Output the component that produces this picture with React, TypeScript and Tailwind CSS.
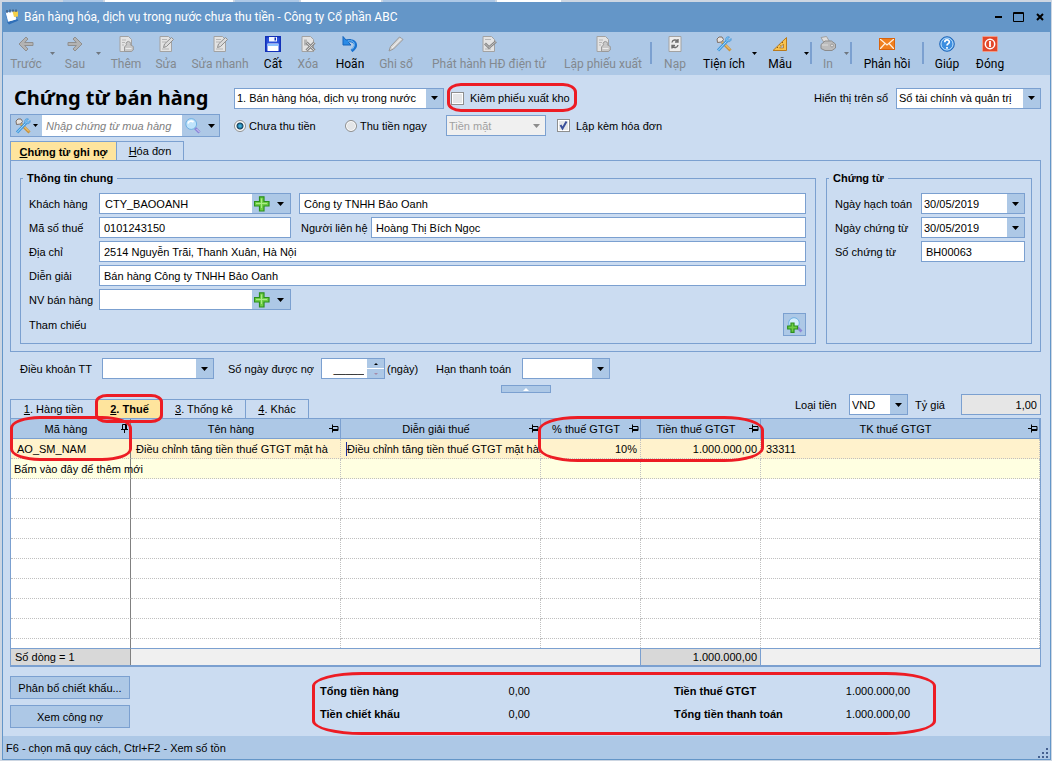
import type { ReactNode } from 'react'

const LINE = 'border-[#7ba0d0]'

/* ---------- icons ---------- */

function Svg({ children, size = 16 }: { children: ReactNode; size?: number }) {
  return (
    <svg width={size} height={size} viewBox="0 0 16 16" fill="none" aria-hidden="true" className="shrink-0">
      {children}
    </svg>
  )
}

const BackIcon = () => (
  <Svg>
    <path d="M8 1 1 8l7 7 2-2-3.300-3.500H15v-3H6.700L10 3z" fill="#b3b3b3" stroke="#8f8f8f" />
  </Svg>
)

const ForwardIcon = () => (
  <Svg>
    <path d="m8 1 7 7-7 7-2-2 3.300-3.500H1v-3h8.300L6 3z" fill="#b3b3b3" stroke="#8f8f8f" />
  </Svg>
)

const Sheet = () => (
  <path d="M2 .5h8.500l3 3v12H2z" fill="#e3e3e3" stroke="#a2a2a2" />
)

const AddIcon = () => (
  <Svg>
    <Sheet />
    <path d="M4 4h4M4 6.500h3M4 9h2" stroke="#b5b5b5" />
    <path d="M8.500 8.800a2.200 2.200 0 1 1 3.800 0l3 1.700v3.500l-2 1.500H6.500V11z" fill="#c8c8c8" stroke="#999" />
    <path d="M7.500 12.500h6" stroke="#ececec" />
  </Svg>
)

const EditIcon = () => (
  <Svg>
    <Sheet />
    <path d="M4 3.500h5M4 6h4M4 13h7" stroke="#b5b5b5" />
    <path d="m5.500 11.500 1-3.500L13.500 1.500l2 2-7 7z" fill="#dadada" stroke="#8e8e8e" />
  </Svg>
)

const SaveIcon = () => (
  <Svg>
    <path d="M.7.7h14.600v14.600H.7z" fill="#2a4fd8" stroke="#1230b8" strokeWidth="1.400" />
    <path d="M4 1h8v4.500H4z" fill="#f4f7ff" />
    <path d="M9.500 1.500H11V4.500H9.500z" fill="#1230b8" />
    <path d="M2.500 7.500h11v7.500h-11z" fill="#fff" />
    <path d="M2.500 8h11v2h-11z" fill="#8cc2ff" />
  </Svg>
)

const DeleteIcon = () => (
  <Svg>
    <Sheet />
    <path d="M4 3.500h3v6H4z" fill="#b5b5b5" />
    <path d="m6.500 6.500 8 8M14.500 6.500l-8 8" stroke="#8a8a8a" strokeWidth="3" />
    <path d="m6.500 6.500 8 8M14.500 6.500l-8 8" stroke="#d2d2d2" />
  </Svg>
)

const UndoIcon = () => (
  <Svg>
    <path d="M4 5.500c9-3 13 4 5.500 9.500" stroke="#1a72cf" strokeWidth="3" />
    <path d="M1 .5v8.500h8L6.500 6.500 8.500 3.500 4 4z" fill="#2b8be6" stroke="#1565bd" />
    <path d="M6 5c7-1.500 8 4.500 4 8.500" stroke="#79c0f7" />
  </Svg>
)

const PencilIcon = () => (
  <Svg>
    <path d="M1 15 2.500 10.500 11.500 1l3.500 2.500-9.500 9.500z" fill="#d5d5d5" stroke="#979797" />
    <path d="m4 12 9-9.500" stroke="#f2f2f2" />
  </Svg>
)

const PublishIcon = () => (
  <Svg>
    <Sheet />
    <path d="M4 3.500h6M4 13h6" stroke="#b5b5b5" />
    <path d="m4 7.500 4 4L15 5.500" stroke="#858585" strokeWidth="2.600" />
    <path d="m4 7.500 4 4L15 5.500" stroke="#cfcfcf" strokeWidth=".8" />
  </Svg>
)

const ReloadIcon = () => (
  <Svg>
    <path d="M2 .5h12v15H2z" fill="#ececec" stroke="#a2a2a2" />
    <path d="M5 6.500c.5-3 4-3 5.500-1.500M11 3v3H8M11 9c-.5 3-4 3-5.500 1.500M5 12.500v-3h3" stroke="#6e6e6e" strokeWidth="1.400" />
  </Svg>
)

const ToolsIcon = () => (
  <Svg>
    <path d="m6 6 8.500 8.500" stroke="#c9923a" strokeWidth="3" />
    <path d="m6.500 6 7.500 7.500" stroke="#ffd98a" />
    <path d="M5.500 6 1.500 6.500 1 3l2-2h3l1.500 2.500z" fill="#e7e3df" stroke="#7d6f67" />
    <path d="m2 14.500 9-9.500" stroke="#3f97dc" strokeWidth="3" />
    <path d="M15 2.500 13 4.500 11.500 3l2-2c-3-1-4.500 1.500-3.500 4 2.500 1.500 6 .5 5-2.500z" fill="#7cc4f5" stroke="#3f8fd2" strokeWidth=".7" />
    <path d="m2 14.500 8.500-9" stroke="#b4e0fb" />
  </Svg>
)

const RulerIcon = () => (
  <Svg>
    <path d="M14.500 1.500v13H1z" fill="#f8c24d" stroke="#b97a1c" />
    <path d="M11.500 8v4H7.500z" fill="#adc7e6" stroke="#b97a1c" strokeWidth=".8" />
    <path d="m10 6 1 1M7.500 8.500l1 1M5 11l1 1" stroke="#8c5a10" />
  </Svg>
)

const PrintIcon = () => (
  <Svg>
    <path d="M1 1.500 6.500.5l3 5-5 2z" fill="#dedede" stroke="#a0a0a0" />
    <path d="M1 8.500 5 5h6.500l4 3v4L12 14.500H5l-4-2z" fill="#bcbcbc" stroke="#8b8b8b" />
    <path d="M2 9h6" stroke="#dcdcdc" />
    <circle cx="12" cy="9.500" r="1.500" fill="#dedede" stroke="#9a9a9a" />
  </Svg>
)

const MailIcon = () => (
  <Svg>
    <path d="M0 2h16v12H0z" fill="#f07f1e" />
    <path d="m1 3 7 6 7-6M1 13l5-5.500M15 13l-5-5.500" stroke="#fff0df" strokeWidth="1.200" />
    <path d="M.5 2.500h15v11H.5z" stroke="#d9630c" />
  </Svg>
)

const HelpIcon = () => (
  <Svg>
    <circle cx="8" cy="8" r="7.300" fill="#3d8fe0" stroke="#2468b8" />
    <circle cx="8" cy="8" r="6" stroke="#bfe0fb" />
    <path d="M5.800 6.200c0-3 4.500-3 4.500-.2C10.300 7.600 8 7.700 8 9.600M8 11v1.700" stroke="#fff" strokeWidth="1.700" />
  </Svg>
)

const PowerIcon = () => (
  <Svg>
    <rect x=".5" y=".5" width="15" height="15" rx="1" fill="#e2472a" stroke="#f09a86" />
    <circle cx="8" cy="8" r="4.700" stroke="#fff" strokeWidth="1.500" />
    <path d="M8 5v6" stroke="#fff" strokeWidth="1.800" />
  </Svg>
)

const AppIcon = () => (
  <Svg>
    <path d="m1 3 9-1.500 3.500 10L4 14z" fill="#e8f3ff" stroke="#4c86c9" />
    <path d="m3 13 10-3 1.500 1.500L5 15.500z" fill="#2f6fb8" />
    <path d="m2.500 4.500 7-1 2.500 7-7.500 2z" fill="#fff" />
    <path d="M8.500 2.500h5.500v5l-4 .5z" fill="#f5d04a" />
    <path d="M3 1v3M6 .5v3M9 .5V3M12 .5v2.500" stroke="#31455e" />
  </Svg>
)

const SearchIcon = () => (
  <Svg>
    <path d="m10 10 4.500 4.500" stroke="#8c86d8" strokeWidth="3" />
    <path d="m11.500 11 3 3" stroke="#d9d5f8" />
    <circle cx="6.200" cy="6" r="5.400" fill="#bfe3fb" stroke="#6fb0e2" />
    <path d="M3 5.500c.5-2.500 3.500-3 5.500-1.500" stroke="#fff" strokeWidth="1.600" />
  </Svg>
)

const PlusPath = ({ d }: { d: string }) => <path d={d} fill="#6fce45" stroke="#2b8f1d" strokeWidth="1.200" />

const PlusIcon = () => (
  <Svg>
    <PlusPath d="M5.500.8h4.500v4.700h5V10h-5v5H5.500v-5h-5V5.500h5z" />
    <path d="M7.500 12V2.500M2 7.500h11" stroke="#a9ec86" />
  </Svg>
)

const SearchPlusIcon = () => (
  <Svg>
    <path d="m10.500 10.500 4 4" stroke="#8c86d8" strokeWidth="2.600" />
    <circle cx="7" cy="6" r="5.300" fill="#d4edfc" stroke="#6fb0e2" />
    <PlusPath d="M4 6h3v3h3.500v3H7v3.400H4V12H.7V9H4z" />
  </Svg>
)

const PinIcon = ({ down = false }: { down?: boolean }) => (
  <svg width="10" height="9" viewBox="0 0 10 9" fill="none" stroke="#000" aria-hidden="true" className="shrink-0">
    {down ? (
      <path d="M3.500.5h4v5h-4zM6.500.5v5M2 5.500h7M5.500 5.500V9" />
    ) : (
      <path d="M3.500 2.500H9v4H3.500zM3.500 5.500H9M3.500.5v8M0 4.500h3.500" />
    )}
  </svg>
)

function Caret({ muted = false }: { muted?: boolean }) {
  return (
    <svg width="7" height="4" viewBox="0 0 7 4" aria-hidden="true" className="shrink-0">
      <path d="M0 0h7L3.500 4z" fill={muted ? '#8c8c8c' : '#000'} />
    </svg>
  )
}

/* ---------- form parts ---------- */

// hand-drawn marker around a place the reader has to look at
const Ring = ({ className }: { className: string }) => (
  <span className={`pointer-events-none absolute z-10 border-[3px] border-[#ed1c24] ${className}`} />
)

function Combo({ id, value, className, label, disabled = false }: {
  id: string
  value: string
  className: string
  label?: string
  disabled?: boolean
}) {
  return (
    <span className={`relative flex h-[21px] border ${LINE} ${className}`}>
      <select
        id={id}
        aria-label={label}
        defaultValue={value}
        disabled={disabled}
        className={`w-full appearance-none pl-0.5 pr-[18px] outline-none ${disabled ? 'bg-[#f0f0f0] text-[#a0a0a0]' : 'bg-white'}`}
      >
        <option>{value}</option>
      </select>
      <span
        className={`pointer-events-none absolute inset-y-0 right-0 flex w-[17px] items-center justify-center ${
          disabled ? 'bg-[#f0f0f0]' : 'bg-[#adc8e6]'
        }`}
      >
        <Caret muted={disabled} />
      </span>
    </span>
  )
}

function Field({ id, value, className }: { id: string; value: string; className: string }) {
  return (
    <input
      id={id}
      defaultValue={value}
      className={`h-[21px] min-w-0 border bg-white px-1 outline-none ${LINE} ${className}`}
    />
  )
}

function LookupField({ id, value, label }: { id: string; value: string; label: string }) {
  return (
    <span className={`flex h-[21px] w-48 border bg-[#adc8e6] ${LINE}`}>
      <input id={id} defaultValue={value} className="min-w-0 flex-1 bg-white px-[5px] outline-none" />
      <button aria-label={`Thêm ${label}`} className="flex w-[19px] items-center justify-center">
        <PlusIcon />
      </button>
      <button aria-label={`Chọn ${label}`} className="flex w-[19px] items-center justify-center">
        <Caret />
      </button>
    </span>
  )
}

function Label({ htmlFor, children, className = '' }: { htmlFor: string; children: ReactNode; className?: string }) {
  return (
    <label htmlFor={htmlFor} className={`shrink-0 whitespace-nowrap ${className}`}>
      {children}
    </label>
  )
}

function CheckBox({ id, checked = false, children }: { id: string; checked?: boolean; children: ReactNode }) {
  return (
    <label htmlFor={id} className="flex items-center gap-1.5 whitespace-nowrap">
      <span className="relative flex size-[13px]">
        <input
          id={id}
          type="checkbox"
          defaultChecked={checked}
          className="peer size-[13px] appearance-none border border-[#8e8f8f] bg-[#e4e6e8] shadow-[inset_0_0_0_1px_#fff]"
        />
        <svg viewBox="0 0 13 13" className="pointer-events-none absolute inset-0 hidden peer-checked:block" aria-hidden="true">
          <path d="m3.500 6 2 3.500 4-7" fill="none" stroke="#3a4f9a" strokeWidth="2" />
        </svg>
      </span>
      {children}
    </label>
  )
}

function Radio({ id, checked = false, children, className = '' }: { id: string; checked?: boolean; children: ReactNode; className?: string }) {
  return (
    <label htmlFor={id} className={`flex items-center gap-[3px] whitespace-nowrap ${className}`}>
      <input
        id={id}
        type="radio"
        name="payment"
        defaultChecked={checked}
        className="size-3 appearance-none rounded-full border border-[#8e8f8f] bg-[#e4e6e8] shadow-[inset_0_0_0_1px_#fff] checked:bg-[radial-gradient(circle,#3fb0dc_0_1px,#12405f_3px,#f4f4f4_4px)]"
      />
      {children}
    </label>
  )
}

/* ---------- toolbar ---------- */

type Tool = { label: string; icon: ReactNode; width: string; off?: boolean; menu?: boolean; sep?: boolean }

const TOOLS: Tool[] = [
  { label: 'Trước', icon: <BackIcon />, width: 'w-[46px]', off: true, menu: true },
  { label: 'Sau', icon: <ForwardIcon />, width: 'w-[40px]', off: true, menu: true },
  { label: 'Thêm', icon: <AddIcon />, width: 'w-[50px]', off: true },
  { label: 'Sửa', icon: <EditIcon />, width: 'w-[30px]', off: true },
  { label: 'Sửa nhanh', icon: <EditIcon />, width: 'w-[78px]', off: true },
  { label: 'Cất', icon: <SaveIcon />, width: 'w-[28px]' },
  { label: 'Xóa', icon: <DeleteIcon />, width: 'w-[42px]', off: true },
  { label: 'Hoãn', icon: <UndoIcon />, width: 'w-[42px]' },
  { label: 'Ghi sổ', icon: <PencilIcon />, width: 'w-[50px]', off: true },
  { label: 'Phát hành HĐ điện tử', icon: <PublishIcon />, width: 'w-[136px]', off: true },
  { label: 'Lập phiếu xuất', icon: <AddIcon />, width: 'w-[92px]', off: true, sep: true },
  { label: 'Nạp', icon: <ReloadIcon />, width: 'w-[44px]', off: true },
  { label: 'Tiện ích', icon: <ToolsIcon />, width: 'w-[54px]', menu: true },
  { label: 'Mẫu', icon: <RulerIcon />, width: 'w-[46px]', menu: true, sep: true },
  { label: 'In', icon: <PrintIcon />, width: 'w-[30px]', off: true, menu: true, sep: true },
  { label: 'Phản hồi', icon: <MailIcon />, width: 'w-[68px]', sep: true },
  { label: 'Giúp', icon: <HelpIcon />, width: 'w-[44px]' },
  { label: 'Đóng', icon: <PowerIcon />, width: 'w-[42px]' },
]

function Toolbar() {
  return (
    <div role="toolbar" className="flex h-[43px] bg-[#adc8e6] font-[Roboto,sans-serif] text-xs">
      {TOOLS.map((t) => (
        <div key={t.label} className="flex shrink-0">
          <button
            disabled={t.off}
            className={`flex flex-col items-center gap-1 whitespace-nowrap pt-1 leading-4 ${t.width} ${t.off ? 'text-[#83898f]' : 'text-black'}`}
          >
            {t.icon}
            {t.label}
          </button>
          {t.menu && (
            <button aria-label={`${t.label} - tùy chọn`} className="flex w-1.5 items-center justify-center">
              <svg width="5" height="3" viewBox="0 0 5 3" aria-hidden="true">
                <path d="M0 0h5L2.500 3z" fill={t.off ? '#6f7780' : '#000'} />
              </svg>
            </button>
          )}
          {t.sep && <span className="mx-px mt-2.5 h-[22px] w-0.5 bg-[#7ba0d0]" />}
        </div>
      ))}
    </div>
  )
}

/* ---------- detail grid ---------- */

const COLUMNS = [
  { title: 'Mã hàng', width: 'w-[120px]', down: true },
  { title: 'Tên hàng', width: 'w-[210px]' },
  { title: 'Diễn giải thuế', width: 'w-[200px]' },
  { title: '% thuế GTGT', width: 'w-[100px]' },
  { title: 'Tiền thuế GTGT', width: 'w-[120px]' },
  { title: 'TK thuế GTGT', width: 'w-auto' },
]

const EMPTY_ROWS = 8

const cellBorder = (i: number) =>
  i === 0 ? 'border-r border-r-[#808080] border-b border-b-[#c0c0c0] [border-bottom-style:dotted]' : 'border-r border-b border-dotted border-[#c0c0c0]'

function DetailGrid() {
  return (
    <div className={`relative border border-b-2 bg-white ${LINE}`}>
      <Ring className="-left-px -top-[3px] h-[45px] w-[122px] rounded-[30px/12px]" />
      <Ring className="left-[527px] -top-[3px] h-[46px] w-[226px] rounded-[40px/14px]" />
      <table className="w-full table-fixed border-separate border-spacing-0">
        <thead>
          <tr className="h-5 bg-[#adc8e6]">
            {COLUMNS.map((c, i) => (
              <th key={c.title} className={`border-r border-b p-0 font-normal ${i === 0 ? 'border-r-[#808080] border-b-[#7ba0d0]' : LINE} ${c.width}`}>
                <span className="flex items-center pl-1.5 pr-px">
                  <span className="flex-1 pr-1 whitespace-nowrap">{c.title}</span>
                  <PinIcon down={c.down} />
                </span>
              </th>
            ))}
          </tr>
        </thead>
        <tbody>
          <tr className="h-5 bg-[#fff2cc]">
            <td className={`p-0 pl-1.5 ${cellBorder(0)}`}>AO_SM_NAM</td>
            <td className={`overflow-hidden p-0 pl-[5px] whitespace-nowrap ${cellBorder(1)}`}>
              Điều chỉnh tăng tiền thuế GTGT mặt hà
            </td>
            <td className={`p-0 pl-[5px] ${cellBorder(2)}`}>
              <input
                aria-label="Diễn giải thuế"
                defaultValue="Điều chỉnh tăng tiền thuế GTGT mặt hàng"
                className="block h-3.5 w-full border-l border-[#1c2f9c] bg-transparent outline-none"
              />
            </td>
            <td className={`p-0 pr-[3px] text-right ${cellBorder(3)}`}>10%</td>
            <td className={`p-0 pr-[3px] text-right ${cellBorder(4)}`}>1.000.000,00</td>
            <td className={`p-0 pl-[5px] ${cellBorder(5)}`}>33311</td>
          </tr>
          <tr className="h-5 bg-[#ffffe1]">
            {COLUMNS.map((c, i) => (
              <td key={c.title} className={`p-0 pl-[3px] whitespace-nowrap ${cellBorder(i)}`}>
                {i === 0 && 'Bấm vào đây để thêm mới'}
              </td>
            ))}
          </tr>
          {Array.from({ length: EMPTY_ROWS }, (_, r) => (
            <tr key={r} className="h-5">
              {COLUMNS.map((c, i) => (
                <td key={c.title} className={`p-0 ${cellBorder(i)}`} />
              ))}
            </tr>
          ))}
          <tr className="h-[9px]">
            {COLUMNS.map((c, i) => (
              <td key={c.title} className={`border-r p-0 ${i === 0 ? 'border-[#808080]' : 'border-dotted border-[#c0c0c0]'}`} />
            ))}
          </tr>
        </tbody>
        <tfoot>
          <tr className="h-[17px] bg-[#f0f0f0]">
            <td className="border-t border-r border-t-[#7ba0d0] border-r-[#808080] bg-[#d8d8d8] p-0 pl-1">Số dòng = 1</td>
            <td colSpan={3} className={`border-t border-r p-0 ${LINE}`} />
            <td className={`border-t border-r bg-[#d8d8d8] p-0 pr-[3px] text-right ${LINE}`}>1.000.000,00</td>
            <td className={`border-t p-0 ${LINE}`} />
          </tr>
        </tfoot>
      </table>
    </div>
  )
}

const DETAIL_TABS = [
  { key: '1', label: 'Hàng tiền', width: 'w-[86px]' },
  { key: '2', label: 'Thuế', width: 'w-[66px]', active: true },
  { key: '3', label: 'Thống kê', width: 'w-[83px]' },
  { key: '4', label: 'Khác', width: 'w-[62px]' },
]

const TOTALS = [
  ['Tổng tiền hàng', '0,00', 'Tiền thuế GTGT', '1.000.000,00'],
  ['Tiền chiết khấu', '0,00', 'Tổng tiền thanh toán', '1.000.000,00'],
]

export default function App() {
  return (
    <div className="flex min-h-screen flex-col bg-[#cdd6e2] pr-px pb-px pl-0.5 font-['Liberation_Sans',Arial,sans-serif] text-[11px] leading-[14px] text-black">
      {/* edge of the list window that lies behind */}
      <div className="flex h-0.5 gap-0.5 pl-[61px]" aria-hidden="true">
        <span className="w-10 bg-[#adc8e6]" />
        <span className="w-32 bg-white" />
        <span className="w-16 bg-[#adc8e6]" />
        <span className="w-20 bg-white" />
        <span className="w-28 bg-[#adc8e6]" />
        <span className="w-16 bg-white" />
      </div>

      <main className="flex flex-1 flex-col border border-t-0 border-[#6496c8] bg-[#cbdcf1]">
        <header className="flex h-[30px] items-center bg-[#6496c8] pl-px font-[Roboto,sans-serif] text-xs text-white">
          <AppIcon />
          <span className="ml-1 flex-1 whitespace-nowrap">Bán hàng hóa, dịch vụ trong nước chưa thu tiền - Công ty Cổ phần ABC</span>
          <button aria-label="Thu nhỏ" className="mr-2.5">
            <svg width="8" height="12" viewBox="0 0 8 12"><path d="M0 5h7v2H0z" fill="#000" /></svg>
          </button>
          <button aria-label="Phóng to" className="mr-3">
            <svg width="11" height="10" viewBox="0 0 11 10"><path d="M.5.5h10v9H.5zM0 1.500h11" fill="none" stroke="#000" /></svg>
          </button>
          <button aria-label="Đóng cửa sổ" className="mr-1.5">
            <svg width="8" height="8" viewBox="0 0 8 8"><path d="m1 1 6 6M7 1 1 7" stroke="#000" strokeWidth="2" /></svg>
          </button>
        </header>

        <Toolbar />

        <div className="flex flex-1 flex-col pr-[9px] pl-[7px]">
          <div className="mt-2 flex h-[30px] items-center">
            <h1 className="w-56 pl-1 font-['Noto_Sans',sans-serif] text-xl font-bold whitespace-nowrap">Chứng từ bán hàng</h1>
            <Combo id="kind" label="Loại chứng từ" value="1. Bán hàng hóa, dịch vụ trong nước" className="w-[210px]" />
            <span className="relative ml-[7px]">
              <CheckBox id="stock">Kiêm phiếu xuất kho</CheckBox>
              <Ring className="-top-2 -left-1 h-[29px] w-[130px] rounded-[14px/9px]" />
            </span>
            <span className="ml-auto flex items-center">
              <Label htmlFor="book">Hiển thị trên sổ</Label>
              <Combo id="book" value="Sổ tài chính và quản trị" className="ml-2 w-[145px]" />
            </span>
          </div>

          <div className="mt-0.5 flex h-[21px] items-center">
            <div className={`flex h-[23px] w-[210px] shrink-0 items-center border bg-[#adc8e6] ${LINE}`}>
              <button aria-label="Tiện ích" className="flex w-[31px] items-center justify-center gap-0.5">
                <ToolsIcon />
                <svg width="5" height="3" viewBox="0 0 5 3" aria-hidden="true"><path d="M0 0h5L2.500 3z" /></svg>
              </button>
              <input aria-label="Chứng từ mua hàng" placeholder="Nhập chứng từ mua hàng" className="h-full min-w-0 flex-1 bg-white pl-1 italic outline-none placeholder:text-[#808080]" />
              <button aria-label="Tìm" className="flex w-[21px] items-center justify-center"><SearchIcon /></button>
              <button aria-label="Tùy chọn tìm" className="flex w-4 items-center justify-center"><Caret /></button>
            </div>
            <Radio id="unpaid" checked className="ml-3.5 w-[111px]">Chưa thu tiền</Radio>
            <Radio id="paid" className="w-[101px]">Thu tiền ngay</Radio>
            <Combo id="method" label="Hình thức thanh toán" value="Tiền mặt" className="mr-[11px] w-[100px]" disabled />
            <CheckBox id="invoice" checked>Lập kèm hóa đơn</CheckBox>
          </div>

          <div role="tablist" className="mt-[5px] -mb-px flex h-5">
            <button role="tab" aria-selected="true" className={`w-[107px] border border-b-0 bg-[#fee49d] font-bold ${LINE}`}>
              <u>C</u>hứng từ ghi nợ
            </button>
            <button role="tab" aria-selected="false" className={`w-[67px] border border-l-0 ${LINE}`}>
              <u>H</u>óa đơn
            </button>
          </div>

          <section className={`flex gap-2.5 border pt-2.5 pr-2 pb-[7px] pl-[9px] ${LINE}`}>
            <fieldset className={`min-w-0 flex-1 border px-2 ${LINE}`}>
              <legend className="-ml-1.5 px-1 font-bold">Thông tin chung</legend>
              <div className="mt-2 flex flex-col gap-[3px] pr-px pb-[7px]">
                <div className="flex items-center">
                  <Label htmlFor="customer" className="w-[70px]">Khách hàng</Label>
                  <LookupField id="customer" value="CTY_BAOOANH" label="khách hàng" />
                  <input aria-label="Tên khách hàng" defaultValue="Công ty TNHH Bảo Oanh" className={`ml-2 h-[21px] min-w-0 flex-1 border bg-white px-1 outline-none ${LINE}`} />
                </div>
                <div className="flex items-center">
                  <Label htmlFor="taxcode" className="w-[70px]">Mã số thuế</Label>
                  <Field id="taxcode" value="0101243150" className="w-48" />
                  <Label htmlFor="contact" className="ml-2.5 w-[70px]">Người liên hệ</Label>
                  <Field id="contact" value="Hoàng Thị Bích Ngọc" className="flex-1" />
                </div>
                <div className="flex items-center">
                  <Label htmlFor="address" className="w-[70px]">Địa chỉ</Label>
                  <Field id="address" value="2514 Nguyễn Trãi, Thanh Xuân, Hà Nội" className="flex-1" />
                </div>
                <div className="flex items-center">
                  <Label htmlFor="memo" className="w-[70px]">Diễn giải</Label>
                  <Field id="memo" value="Bán hàng Công ty TNHH Bảo Oanh" className="flex-1" />
                </div>
                <div className="flex items-center">
                  <Label htmlFor="seller" className="w-[70px]">NV bán hàng</Label>
                  <LookupField id="seller" value="" label="nhân viên" />
                </div>
                <div className="flex items-center justify-between">
                  <span>Tham chiếu</span>
                  <button aria-label="Chọn tham chiếu" className={`flex size-[23px] items-center justify-center border bg-[#adc8e6] ${LINE}`}>
                    <SearchPlusIcon />
                  </button>
                </div>
              </div>
            </fieldset>

            <fieldset className={`w-[206px] border pr-1.5 pl-2 ${LINE}`}>
              <legend className="-ml-1.5 px-1 font-bold">Chứng từ</legend>
              <div className="mt-2 grid grid-cols-[1fr_104px] items-center gap-y-[3px]">
                <Label htmlFor="posted">Ngày hạch toán</Label>
                <Combo id="posted" value="30/05/2019" className="w-full" />
                <Label htmlFor="dated">Ngày chứng từ</Label>
                <Combo id="dated" value="30/05/2019" className="w-full" />
                <Label htmlFor="number">Số chứng từ</Label>
                <Field id="number" value="BH00063" className="w-full" />
              </div>
            </fieldset>
          </section>

          <div className="mt-1.5 flex items-center pl-2.5">
            <Label htmlFor="terms" className="w-[82px]">Điều khoản TT</Label>
            <Combo id="terms" value="" className="w-28" />
            <Label htmlFor="days" className="ml-3.5 w-[93px]">Số ngày được nợ</Label>
            <span className={`flex h-[21px] w-16 border bg-white ${LINE}`}>
              <input id="days" defaultValue="_____" className="min-w-0 flex-1 pr-[3px] text-right outline-none" />
              <span className="flex w-[17px] flex-col gap-px">
                <button aria-label="Tăng" className="flex flex-1 items-center justify-center bg-[#adc8e6]">
                  <svg width="4" height="2" viewBox="0 0 4 2"><path d="M0 2h4L2 0z" /></svg>
                </button>
                <button aria-label="Giảm" className="flex flex-1 items-center justify-center bg-[#adc8e6]">
                  <svg width="4" height="2" viewBox="0 0 4 2"><path d="M0 0h4L2 2z" fill="#a58aa8" /></svg>
                </button>
              </span>
            </span>
            <span className="ml-0.5 w-[49px]">(ngày)</span>
            <Label htmlFor="due" className="w-[86px]">Hạn thanh toán</Label>
            <Combo id="due" value="" className="w-[88px]" />
          </div>

          <button aria-label="Thu gọn" className={`mt-1.5 flex h-2 w-[50px] items-center justify-center self-center border bg-[#adc8e6] ${LINE}`}>
            <svg width="6" height="3" viewBox="0 0 6 3"><path d="M0 3h6L3 0z" fill="#fff" /></svg>
          </button>

          <div className="flex h-[25px] items-end">
            <div role="tablist" className={`relative flex h-[19px] border border-b-0 ${LINE}`}>
              {DETAIL_TABS.map((t) => (
                <button
                  key={t.key}
                  role="tab"
                  aria-selected={!!t.active}
                  className={`relative ${t.width} ${t.key === '4' ? '' : `border-r ${LINE}`} ${t.active ? 'bg-[#fee49d] font-bold' : ''}`}
                >
                  <u>{t.key}</u>. {t.label}
                  {t.active && <Ring className="-top-1.5 -left-0.5 h-[29px] w-[68px] rounded-[12px/8px]" />}
                </button>
              ))}
            </div>
            <div className="ml-auto flex items-center pb-[3px]">
              <Label htmlFor="currency" className="w-[54px]">Loại tiền</Label>
              <Combo id="currency" value="VND" className="w-[59px]" />
              <Label htmlFor="rate" className="ml-[7px] w-[46px]">Tỷ giá</Label>
              <input id="rate" defaultValue="1,00" readOnly className={`h-[21px] w-20 border bg-[#e6e6e6] pr-[3px] text-right outline-none ${LINE}`} />
            </div>
          </div>

          <DetailGrid />

          <div className="mt-[9px] flex">
            <div className="flex w-[120px] shrink-0 flex-col gap-1.5">
              <button className={`h-[23px] border bg-[#adc8e6] ${LINE}`}>Phân bổ chiết khấu...</button>
              <button className={`h-[23px] border bg-[#adc8e6] ${LINE}`}>Xem công nợ</button>
            </div>
            <div className="relative ml-[182px]">
              <Ring className="-top-1 left-0 h-[63px] w-[624px] rounded-[50px/14px]" />
              <table className="table-fixed">
                <tbody>
                  {TOTALS.map(([a, av, b, bv]) => (
                    <tr key={a} className="h-[23px]">
                      <th className="w-[128px] p-0 pl-2 pt-1.5 text-left font-bold whitespace-nowrap">{a}</th>
                      <td className="w-[90px] p-0 pt-1.5 text-right">{av}</td>
                      <th className="w-[280px] p-0 pt-1.5 pl-36 text-left font-bold whitespace-nowrap">{b}</th>
                      <td className="w-[100px] p-0 pt-1.5 text-right">{bv}</td>
                    </tr>
                  ))}
                </tbody>
              </table>
            </div>
          </div>
        </div>

        <footer className="flex h-[23px] items-center justify-between bg-[#adc8e6] pl-[3px]">
          <span>F6 - chọn mã quy cách, Ctrl+F2 - Xem số tồn</span>
          <svg width="12" height="12" viewBox="0 0 12 12" className="self-end" fill="#44608f" aria-hidden="true">
            <path d="M8 1h2v2H8zM4 5h2v2H4zM8 5h2v2H8zM0 9h2v2H0zM4 9h2v2H4zM8 9h2v2H8z" />
          </svg>
        </footer>
      </main>
    </div>
  )
}
